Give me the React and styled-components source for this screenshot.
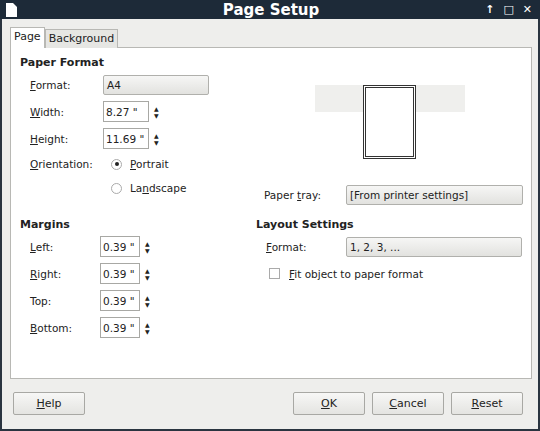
import React from "react";
import styled, { createGlobalStyle } from "styled-components";

const Global = createGlobalStyle`
  html, body { margin: 0; padding: 0; background: #eeeeec; }
  body { font-family: "DejaVu Sans", "Noto Sans", sans-serif; font-size: 10.5px; color: #222; }
`;

const Window = styled.div`
  width: 540px;
  height: 431px;
  box-sizing: border-box;
  border: 2px solid #2a3440;
  border-top: none;
  background: #eeeeec;
  display: flex;
  flex-direction: column;
`;
const TitleBar = styled.div`
  height: 19px;
  background: #1d2a38;
  color: #fff;
  display: flex;
  align-items: center;
  padding: 0 8px 0 6px;
  margin: 0 -2px;
`;
const Title = styled.div`
  flex: 1;
  text-align: center;
  font-weight: bold;
  font-size: 15px;
  padding-left: 40px;
`;
const Ctrls = styled.div`
  display: flex;
  gap: 9px;
  font-size: 11px;
  font-weight: bold;
`;
const Tabs = styled.div`
  display: flex;
  padding: 8px 0 0 8px;
  height: 20px;
`;
const Tab = styled.div`
  padding: 2px 3px 0;
  border: 1px solid #b8b8b4;
  border-bottom: none;
  background: ${(p) => (p.active ? "#fff" : "#e6e6e3")};
  margin-top: ${(p) => (p.active ? "0" : "2px")};
  font-size: 11px;
  position: relative;
  z-index: 1;
  margin-bottom: -1px;
`;
const Panel = styled.div`
  margin: 0 6px 0 8px;
  height: 332px;
  background: #fff;
  border: 1px solid #b8b8b4;
  box-sizing: border-box;
  display: grid;
  grid-template-columns: 236px 1fr;
  grid-template-rows: 152px 1fr;
  padding: 8px 10px 0 9px;
  white-space: nowrap;
`;
const Section = styled.div`
  display: flex;
  flex-direction: column;
`;
const Heading = styled.div`
  font-weight: bold;
  font-size: 11px;
  margin-bottom: 2px;
`;
const Row = styled.div`
  display: flex;
  align-items: center;
  height: ${(p) => p.h || 27}px;
  padding-left: ${(p) => p.indent || 10}px;
`;
const Label = styled.div`
  width: ${(p) => p.w}px;
`;
const U = styled.span`text-decoration: underline;`;
const Select = styled.div`
  width: ${(p) => p.w}px;
  height: 20px;
  box-sizing: border-box;
  border: 1px solid #b0b0ac;
  border-radius: 2px;
  background: linear-gradient(#f6f6f5, #e2e2df);
  padding: 2px 3px;
  display: flex;
  align-items: center;
`;
const Input = styled.div`
  width: ${(p) => p.w || 46}px;
  height: 21px;
  box-sizing: border-box;
  border: 1px solid #a8a8a4;
  padding: 0 2px;
  display: flex;
  align-items: center;
`;
const Spin = styled.div`
  margin-left: 5px;
  display: flex;
  flex-direction: column;
  font-size: 6px;
  line-height: 7px;
`;
const Radio = styled.span`
  width: 9px;
  height: 9px;
  border-radius: 50%;
  border: 1px solid #aaa;
  display: inline-flex;
  align-items: center;
  justify-content: center;
  margin-right: 8px;
  &::after {
    content: "";
    width: 4px;
    height: 4px;
    border-radius: 50%;
    background: ${(p) => (p.on ? "#222" : "transparent")};
  }
`;
const Check = styled.span`
  width: 9px;
  height: 9px;
  border: 1px solid #aaa;
  margin-right: 9px;
`;
const Preview = styled.div`
  display: flex;
  flex-direction: column;
  align-items: center;
`;
const Band = styled.div`
  margin-top: 29px;
  margin-left: 0px;
  width: 150px;
  height: 27px;
  background: #efefed;
  display: flex;
  justify-content: center;
`;
const Page = styled.div`
  margin-top: 2px;
  width: 47px;
  height: 68px;
  border: 1px solid #333;
  outline: 1px solid #fff;
  box-shadow: 0 0 0 2px #333;
  background: #fff;
`;
const Footer = styled.div`
  flex: 1;
  display: flex;
  align-items: center;
  padding: 0 12px 2px 11px;
  gap: 7px;
`;
const Button = styled.div`
  width: 72px;
  height: 23px;
  box-sizing: border-box;
  border: 1px solid #a8a8a4;
  border-radius: 2px;
  background: linear-gradient(#f7f7f6, #e4e4e1);
  display: flex;
  align-items: center;
  justify-content: center;
  font-size: 11px;
  margin-left: ${(p) => p.ml || 0}px;
`;

const Spinner = () => (
  <Spin>
    <span>▲</span>
    <span>▼</span>
  </Spin>
);

export default function App() {
  const margins = [
    ["L", "eft:"], ["R", "ight:"], ["", "Top:"], ["B", "ottom:"],
  ];
  return (
    <Window>
      <Global />
      <TitleBar>
        <svg width="11" height="14" viewBox="0 0 11 14">
          <path d="M0 0h7l4 4v10H0z" fill="#fff" />
        </svg>
        <Title>Page Setup</Title>
        <Ctrls>
          <span>↑</span>
          <span>□</span>
          <span>✕</span>
        </Ctrls>
      </TitleBar>
      <Tabs>
        <Tab active>Page</Tab>
        <Tab>Background</Tab>
      </Tabs>
      <Panel>
        <Section>
          <Heading>Paper Format</Heading>
          <Row><Label w={73}><U>F</U>ormat:</Label><Select w={106}>A4</Select></Row>
          <Row><Label w={73}><U>W</U>idth:</Label><Input>8.27 "</Input><Spinner /></Row>
          <Row><Label w={73}><U>H</U>eight:</Label><Input>11.69 "</Input><Spinner /></Row>
          <Row h={24}><Label w={81}><U>O</U>rientation:</Label><Radio on /><span><U>P</U>ortrait</span></Row>
          <Row h={24}><Label w={81} /><Radio /><span>La<U>n</U>dscape</span></Row>
        </Section>
        <Section>
          <Preview><Band><Page /></Band></Preview>
          <Row indent={8} style={{ marginTop: "auto" }}>
            <Label w={82}>Paper <U>t</U>ray:</Label>
            <Select w={177}>[From printer settings]</Select>
          </Row>
        </Section>
        <Section>
          <Heading style={{ marginTop: 10 }}>Margins</Heading>
          {margins.map(([u, rest]) => (
            <Row key={rest}>
              <Label w={70}>{u && <U>{u}</U>}{rest}</Label>
              <Input w={40}>0.39 "</Input>
              <Spinner />
            </Row>
          ))}
        </Section>
        <Section>
          <Heading style={{ marginTop: 10 }}>Layout Settings</Heading>
          <Row>
            <Label w={80}><U>F</U>ormat:</Label>
            <Select w={176}>1, 2, 3, ...</Select>
          </Row>
          <Row indent={13}><Check /><span><U>F</U>it object to paper format</span></Row>
        </Section>
      </Panel>
      <Footer>
        <Button><U>H</U>elp</Button>
        <Button ml={201}><U>O</U>K</Button>
        <Button><U>C</U>ancel</Button>
        <Button><U>R</U>eset</Button>
      </Footer>
    </Window>
  );
}
